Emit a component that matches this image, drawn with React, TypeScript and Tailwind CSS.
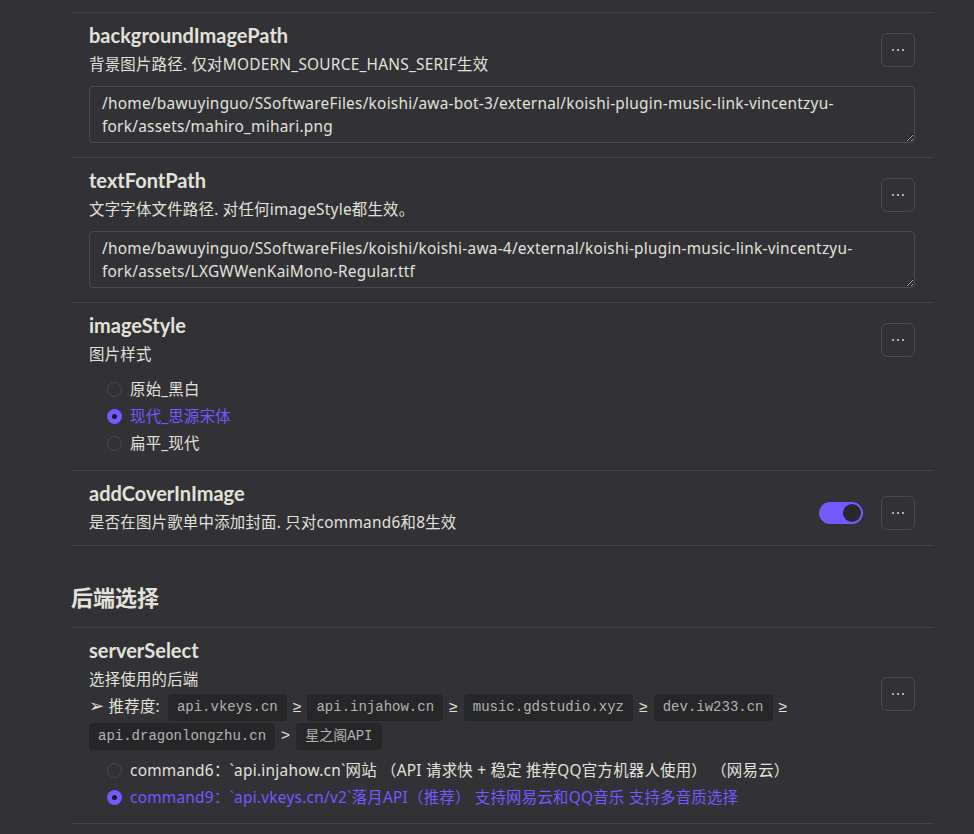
import React from 'react';

const font = { fontFamily: '"Noto Sans", "Noto Sans CJK SC", sans-serif' };
const titleFont = { fontFamily: 'Lato, "Noto Sans CJK SC", sans-serif' };

function MoreButton() {
  return (
    <button
      type="button"
      className="flex h-[34px] w-[34px] shrink-0 items-center justify-center rounded-md border border-[#4a4a50] text-[#cfcfcf]"
    >
      <svg width="14" height="4" viewBox="0 0 14 4" fill="currentColor">
        <circle cx="2" cy="2" r="1.1" />
        <circle cx="7" cy="2" r="1.1" />
        <circle cx="12" cy="2" r="1.1" />
      </svg>
    </button>
  );
}

function Radio({ label, checked }: { label: string; checked?: boolean }) {
  return (
    <label className={`flex h-[27px] items-center gap-[8px] ${checked ? 'text-[#7459ff]' : 'text-[#e2e2da]'}`}>
      {checked ? (
        <span className="flex h-[15px] w-[15px] shrink-0 items-center justify-center rounded-full bg-[#7459ff]">
          <span className="h-[5px] w-[5px] rounded-full bg-[#1b1b1f]" />
        </span>
      ) : (
        <span className="h-[15px] w-[15px] shrink-0 rounded-full border border-[#4a4a50]" />
      )}
      <span>{label}</span>
    </label>
  );
}

function Code({ children }: { children: React.ReactNode }) {
  return (
    <code
      className="inline-block rounded-[4px] bg-[#262629] px-[9px] align-middle text-[14px] leading-[27px] tracking-normal text-[#b3b3ae]"
      style={{ fontFamily: '"Liberation Mono", "Noto Sans CJK SC", monospace' }}
    >
      {children}
    </code>
  );
}

function Ge({ sign = '≥' }: { sign?: string }) {
  return (
    <span className="mx-[6px]" style={{ fontFamily: '"Liberation Sans", sans-serif' }}>
      {sign}
    </span>
  );
}

function Item({
  title,
  desc,
  right,
  children,
  last,
}: {
  title: string;
  desc: React.ReactNode;
  right?: React.ReactNode;
  children?: React.ReactNode;
  last?: boolean;
}) {
  return (
    <div className={`border-t border-[#434349] px-[18px] pt-[10px] ${last ? 'border-b' : ''}`}>
      <div className="flex items-center gap-[18px]">
        <div className="min-w-0 flex-1">
          <h3 className="text-[20px] font-bold leading-6 text-[#e2e2da]" style={titleFont}>
            {title}
          </h3>
          <div className="mt-[6px] text-[15.4px] leading-6 tracking-[0.25px] text-[#e2e2da]">{desc}</div>
        </div>
        <div className="flex items-center gap-[18px]">
          {right}
          <MoreButton />
        </div>
      </div>
      {children}
    </div>
  );
}

function PathField({ value }: { value: string }) {
  return (
    <div className="pb-[14px] pt-[9px]">
      <textarea
        readOnly
        defaultValue={value}
        className="block h-[57px] w-full resize-y rounded-[4px] border border-[#4a4a50] bg-transparent px-[12px] py-[5px] text-[15.4px] leading-[23px] tracking-[0.25px] text-[#e2e2da] outline-none"
        style={font}
      />
    </div>
  );
}

export default function App() {
  return (
    <div className="min-h-[834px] w-full bg-[#313136] pt-[12px]" style={font}>
      <div className="ml-[71px] w-[862px]">
        <Item title="backgroundImagePath" desc="背景图片路径. 仅对MODERN_SOURCE_HANS_SERIF生效">
          <PathField value="/home/bawuyinguo/SSoftwareFiles/koishi/awa-bot-3/external/koishi-plugin-music-link-vincentzyu-fork/assets/mahiro_mihari.png" />
        </Item>
        <Item title="textFontPath" desc="文字字体文件路径. 对任何imageStyle都生效。">
          <PathField value="/home/bawuyinguo/SSoftwareFiles/koishi/koishi-awa-4/external/koishi-plugin-music-link-vincentzyu-fork/assets/LXGWWenKaiMono-Regular.ttf" />
        </Item>
        <Item title="imageStyle" desc="图片样式">
          <div className="pb-[13px] pl-[18px] pt-[9px] text-[15.4px] tracking-[0.25px]">
            <Radio label="原始_黑白" />
            <Radio label="现代_思源宋体" checked />
            <Radio label="扁平_现代" />
          </div>
        </Item>
        <Item
          title="addCoverInImage"
          desc={<div className="pb-[10px]">是否在图片歌单中添加封面. 只对command6和8生效</div>}
          right={
            <span className="relative inline-block h-[22px] w-[44px] rounded-full bg-[#7459ff]">
              <span className="absolute right-[2px] top-[2px] h-[18px] w-[18px] rounded-full bg-[#28282c]" />
            </span>
          }
          last
        />

        <h2 className="pb-[15px] pt-[36px] text-[22px] font-bold leading-[30px] text-[#e2e2da]">后端选择</h2>

        <Item
          title="serverSelect"
          desc={
            <>
              <p>选择使用的后端</p>
              <p className="leading-[28px]">
                <span className="text-[18px]" style={{ fontFamily: '"DejaVu Sans", sans-serif' }}>
                  ➢
                </span>{' '}
                推荐度:<span className="inline-block w-[8px]" />
                <Code>api.vkeys.cn</Code>
                <Ge />
                <Code>api.injahow.cn</Code>
                <Ge />
                <Code>music.gdstudio.xyz</Code>
                <Ge />
                <Code>dev.iw233.cn</Code>
                <Ge /> <Code>api.dragonlongzhu.cn</Code>
                <Ge sign=">" />
                <Code>星之阁API</Code>
              </p>
            </>
          }
          last
        >
          <div className="pb-[12px] pl-[18px] pt-[7px] text-[15.4px] tracking-[0.25px]">
            <Radio label="command6：`api.injahow.cn`网站 （API 请求快 + 稳定 推荐QQ官方机器人使用） （网易云）" />
            <Radio label="command9：`api.vkeys.cn/v2`落月API（推荐） 支持网易云和QQ音乐 支持多音质选择" checked />
          </div>
        </Item>
      </div>
    </div>
  );
}
